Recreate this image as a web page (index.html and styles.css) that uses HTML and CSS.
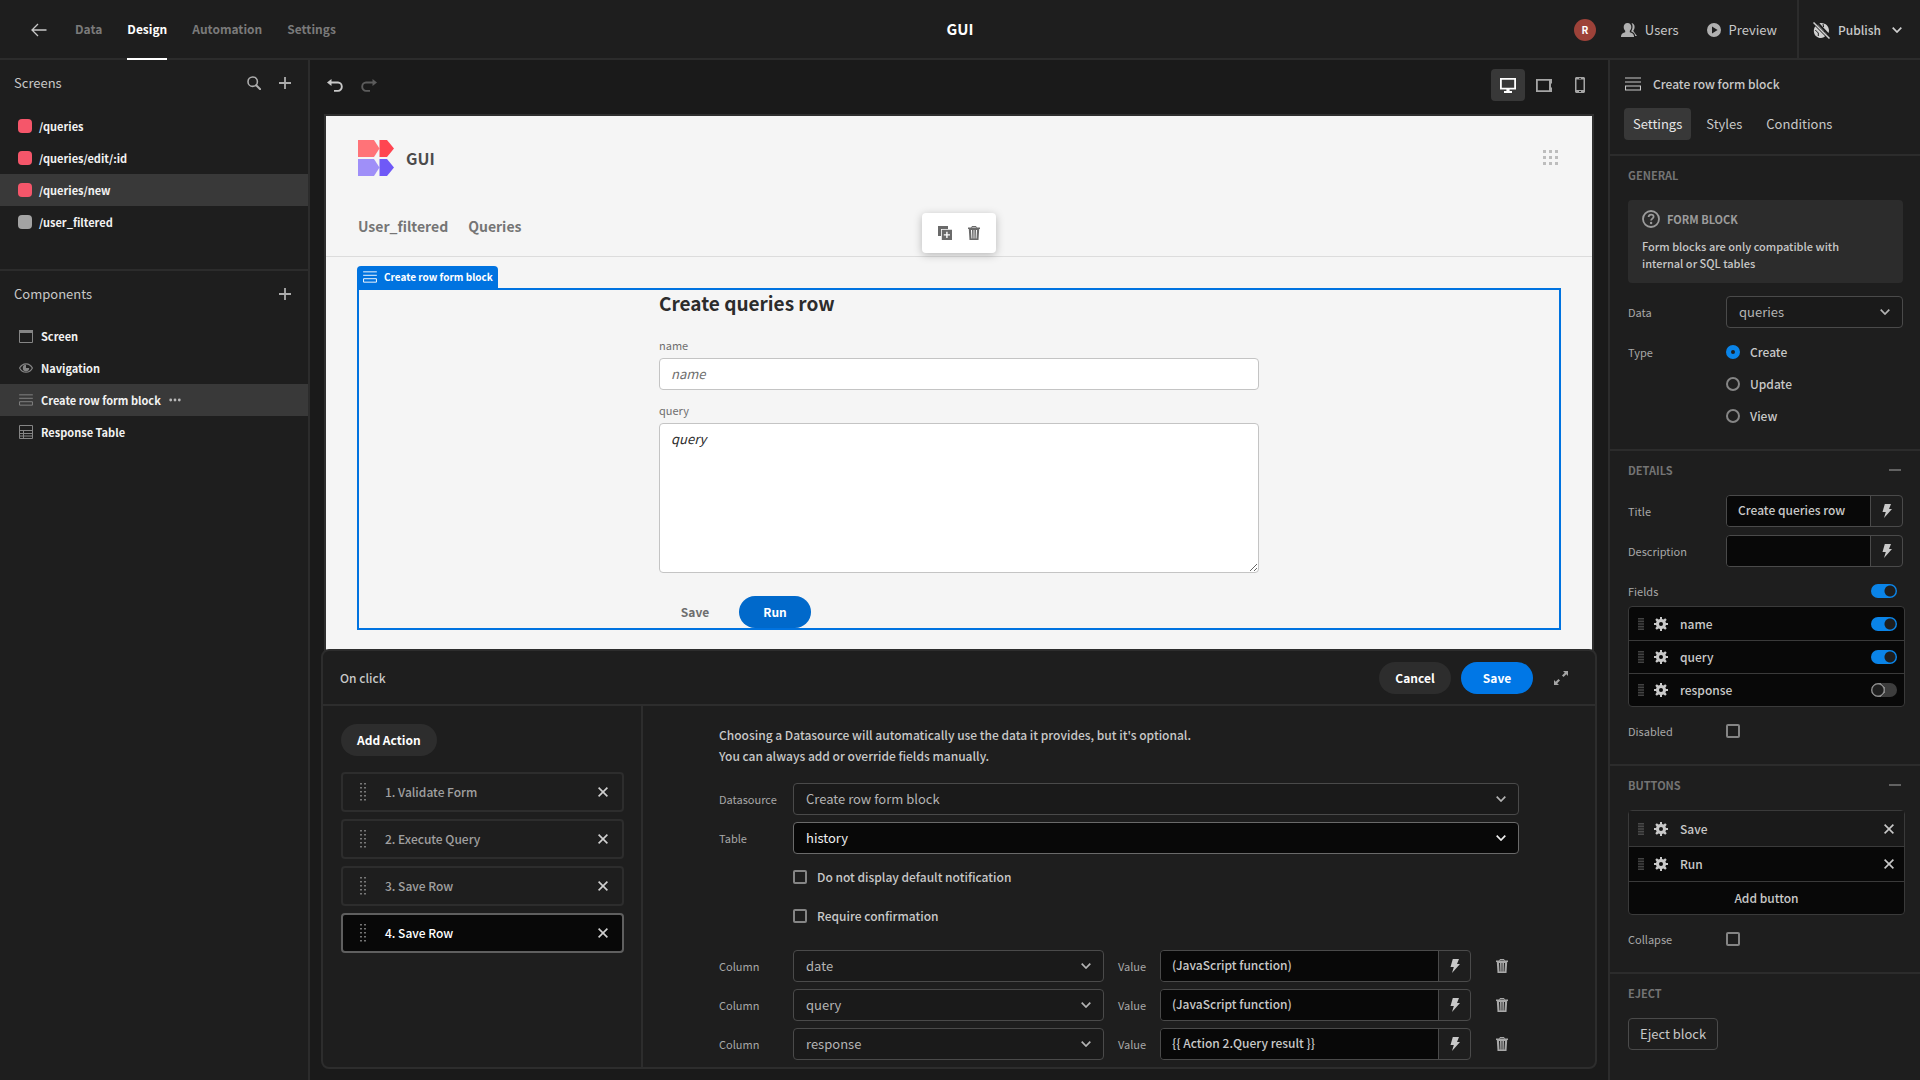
FILE: index.html
```html
<!DOCTYPE html>
<html lang="en">
<head>
    <meta charset="UTF-8">
    <meta name="viewport" content="width=device-width, initial-scale=1">
    <title>GUI - Design</title>
    <link rel="stylesheet" href="styles.css">
</head>
<body>

<!-- icons -->
<svg class="sprite" aria-hidden="true">
    <symbol id="i-back" viewBox="0 0 16 14"><path d="M15.5 7H1M7 1L1 7l6 6" fill="none" stroke="currentColor" stroke-width="1.3"/></symbol>
    <symbol id="i-search" viewBox="0 0 14 14"><circle cx="5.7" cy="5.7" r="4.7" fill="none" stroke="currentColor" stroke-width="1.6"/><path d="M9.2 9.2l4 4" stroke="currentColor" stroke-width="2" stroke-linecap="round"/></symbol>
    <symbol id="i-plus" viewBox="0 0 12 12"><path d="M6 0v12M0 6h12" stroke="currentColor" stroke-width="1.8"/></symbol>
    <symbol id="i-minus" viewBox="0 0 12 12"><path d="M0 6h12" stroke="currentColor" stroke-width="1.6"/></symbol>
    <symbol id="i-close" viewBox="0 0 10 10"><path d="M.6.6l8.8 8.8M9.4.6L.6 9.4" stroke="currentColor" stroke-width="1.6"/></symbol>
    <symbol id="i-chevron" viewBox="0 0 10 6"><path d="M.7.7L5 5 9.3.7" fill="none" stroke="currentColor" stroke-width="1.7"/></symbol>
    <symbol id="i-undo" viewBox="0 0 16 13"><path d="M4 3.5h7a3.8 4.2 0 0 1 0 8.4H7" fill="none" stroke="currentColor" stroke-width="1.9"/><path d="M0 3.5L4.5 0v7z"/></symbol>
    <symbol id="i-screen" viewBox="0 0 14 13"><path d="M.5.5h13v12H.5z" fill="none" stroke="currentColor"/><path d="M0 0h14v3H0z"/></symbol>
    <symbol id="i-eye" viewBox="0 0 14 10"><path d="M.6 5C3.5-.6 10.5-.6 13.4 5 10.5 10.6 3.5 10.6.6 5z" fill="none" stroke="currentColor" stroke-width="1.2"/><path d="M7 1.8A3.2 3.2 0 1 0 10.2 5H7z"/></symbol>
    <symbol id="i-form" viewBox="0 0 16 14"><path d="M0 1h16M0 5h16M.5 9h15v4H.5z" fill="none" stroke="currentColor" stroke-width="1.1"/></symbol>
    <symbol id="i-table" viewBox="0 0 14 14"><path d="M.5.5h13v13H.5zM0 5.5h14M0 8.5h14M0 11h14M4.5 5.5v8" fill="none" stroke="currentColor"/></symbol>
    <symbol id="i-more" viewBox="0 0 12 4"><circle cx="1.7" cy="2" r="1.4"/><circle cx="6" cy="2" r="1.4"/><circle cx="10.3" cy="2" r="1.4"/></symbol>
    <symbol id="i-desktop" viewBox="0 0 16 15"><path d="M0 0h16v11.5H9.6V13H12v2H4v-2h2.4v-1.5H0zM1.8 1.8v7.9h12.4V1.8z" fill-rule="evenodd"/></symbol>
    <symbol id="i-tablet" viewBox="0 0 16 13"><path d="M0 0h16v4.5h-1v4h1V13H0zM1.8 1.8v9.4H13V1.8z" fill-rule="evenodd"/></symbol>
    <symbol id="i-phone" viewBox="0 0 10 16"><path d="M1 0h8l1 1v14l-1 1H1l-1-1V1zM1.5 2.5V13h7V2.5zM4 .9v.8h2V.9zM4 14v1h2v-1z" fill-rule="evenodd"/></symbol>
    <symbol id="i-users" viewBox="0 0 16 14"><path d="M6.5 0C9 0 10.3 1.7 10.3 4c0 1.6-.7 3-1.5 3.8v1.4c2 .6 4.2 1.6 4.2 4V14H0v-.8c0-2.4 2.2-3.4 4.2-4V7.8C3.4 7 2.7 5.6 2.7 4 2.7 1.7 4 0 6.5 0z"/><path d="M10.6 0c2 .4 3 2 3 4s-.8 3-1.4 3.8L16 13h-1.8c-.4-2.6-1.8-3.8-3.9-4.5V8c1.6-2.4 1.8-5.4.3-8z"/></symbol>
    <symbol id="i-play" viewBox="0 0 14 14"><path d="M7 0a7 7 0 1 1 0 14A7 7 0 0 1 7 0zM5 3.6v6.8L10.6 7z" fill-rule="evenodd"/></symbol>
    <symbol id="i-globe" viewBox="0 0 17 17"><path d="M5 2.4l8.8 9.6C12 15 9.5 16 8 16c-4 0-7.2-3-7.2-7.3C.8 7 1.5 5 3 3.7zM8 .9c5 0 8 3.6 8 7.6 0 .8-.2 1.6-.5 2.4L6.4 1.2z"/><path d="M2.3 8l3 3v3M10 2l.6 3M11 12l1-4" stroke="#1e1e1e" fill="none"/><path d="M.5.5l16 16" stroke="#1e1e1e" stroke-width="3"/><path d="M.5.5l16 16" stroke="currentColor" stroke-width="1.5"/></symbol>
    <symbol id="i-help" viewBox="0 0 18 18"><circle cx="9" cy="9" r="8" fill="none" stroke="currentColor" stroke-width="1.8"/><path d="M6.6 7c0-3.2 5-3.2 5-.3 0 1.9-2.5 1.9-2.5 3.9" fill="none" stroke="currentColor" stroke-width="1.8"/><circle cx="9.1" cy="13" r="1.2"/></symbol>
    <symbol id="i-bolt" viewBox="0 0 10 14"><path d="M2.8 0H9L7 5h3L2 14l1.8-6H.5z"/></symbol>
    <symbol id="i-gear" viewBox="0 0 14 14"><path d="M6 0h2v2l1.5.6 1.7-1.4 1.5 1.5-1.3 1.8L12 6h2v2h-2l-.6 1.5 1.3 1.7-1.5 1.5-1.7-1.3L8 12v2H6v-2l-1.5-.6-1.7 1.3-1.5-1.5 1.3-1.7L2 8H0V6h2l.6-1.5-1.3-1.8 1.5-1.5 1.7 1.4L6 2zM7 5a2 2 0 1 0 0 4 2 2 0 0 0 0-4z" fill-rule="evenodd"/></symbol>
    <symbol id="i-trash" viewBox="0 0 12 14"><path d="M4 0h4l.8 1.5H12V3h-.8l-.7 11h-9L.8 3H0V1.5h3.2zM4.3 1h3.4l.3.5H4zM3 4l.5 8.5h.8L4 4zM5.6 4v8.5h.8V4zM8 4l-.3 8.5h.8L9 4z" fill-rule="evenodd"/></symbol>
    <symbol id="i-copy" viewBox="0 0 14 14"><path d="M0 0h10v3H3v7H0z"/><path d="M3.8 3.8H14V14H3.8zM8.2 5.8v2.4H5.8v1.4h2.4V12h1.4V9.6H12V8.2H9.6V5.8z" fill-rule="evenodd"/></symbol>
    <symbol id="i-expand" viewBox="0 0 14 14"><path d="M9 0h5v5l-1.7-1.7L9.5 6.1 8 4.6l2.8-2.9zM5 14H0V9l1.7 1.7L4.5 7.9 6 9.4l-2.8 2.9z"/></symbol>
    <symbol id="i-apps" viewBox="0 0 16 16"><path d="M0 0h3v3H0zM6 0h3v3H6zM12 0h3v3h-3zM0 6h3v3H0zM6 6h3v3H6zM12 6h3v3h-3zM0 12h3v3H0zM6 12h3v3H6zM12 12h3v3h-3z"/></symbol>
    <symbol id="i-grip" viewBox="0 0 6 18"><path d="M1 0v18M5 0v18" stroke="currentColor" stroke-width="1.6" stroke-dasharray="1.6 2.4" fill="none"/></symbol>
    <symbol id="i-drag" viewBox="0 0 6 12"><path d="M1 0v12M3 0v12M5 0v12" stroke="currentColor" stroke-width="1.2" stroke-dasharray="1.6 1" fill="none"/></symbol>
    <symbol id="i-logo" viewBox="0 0 36 36"><path d="M0 0h16l5.5 8.5L16 17H0z" fill="#ff7378"/><path d="M21.5 0H29l7 8.5-7 8.5h-7.5z" fill="#ff4551"/><path d="M0 19h16l5.5 8.5L16 36H0z" fill="#9f8ff8"/><path d="M21.5 19H29l7 8.5-7 8.5h-7.5z" fill="#6f59f7"/></symbol>
</svg>

<div class="app">
    <!-- top bar -->
    <header class="topbar">
        <div class="topbar-left">
            <a href="#" class="back" aria-label="Back"><svg width="16" height="14"><use href="#i-back"/></svg></a>
            <nav class="tabs">
                <a href="#">Data</a>
                <a href="#" class="current">Design</a>
                <a href="#">Automation</a>
                <a href="#">Settings</a>
            </nav>
        </div>
        <h1 class="app-name">GUI</h1>
        <div class="topbar-right">
            <span class="avatar">R</span>
            <button class="top-action"><svg width="16" height="14"><use href="#i-users"/></svg>Users</button>
            <button class="top-action preview"><svg width="14" height="14"><use href="#i-play"/></svg>Preview</button>
            <button class="top-action publish"><svg width="17" height="17"><use href="#i-globe"/></svg>Publish<svg class="arrow" width="10" height="6"><use href="#i-chevron"/></svg></button>
        </div>
    </header>

    <div class="main">
        <!-- screens and component tree -->
        <aside class="left">
            <section class="screens">
                <div class="panel-head">
                    <h2>Screens</h2>
                    <button aria-label="Search"><svg width="14" height="14"><use href="#i-search"/></svg></button>
                    <button aria-label="Add screen"><svg width="12" height="12"><use href="#i-plus"/></svg></button>
                </div>
                <ul class="nav-list">
                    <li><span class="dot"></span>/queries</li>
                    <li><span class="dot"></span>/queries/edit/:id</li>
                    <li class="current"><span class="dot"></span>/queries/new</li>
                    <li><span class="dot gray"></span>/user_filtered</li>
                </ul>
            </section>
            <section class="components">
                <div class="panel-head">
                    <h2>Components</h2>
                    <button aria-label="Add component"><svg width="12" height="12"><use href="#i-plus"/></svg></button>
                </div>
                <ul class="nav-list tree">
                    <li><svg width="14" height="13"><use href="#i-screen"/></svg>Screen</li>
                    <li><svg width="14" height="10"><use href="#i-eye"/></svg>Navigation</li>
                    <li class="current"><svg width="14" height="12"><use href="#i-form"/></svg>Create row form block<button class="more" aria-label="More"><svg width="12" height="4"><use href="#i-more"/></svg></button></li>
                    <li><svg width="14" height="14"><use href="#i-table"/></svg>Response Table</li>
                </ul>
            </section>
        </aside>

        <!-- preview -->
        <main class="center">
            <div class="toolbar">
                <button aria-label="Undo"><svg width="16" height="13"><use href="#i-undo"/></svg></button>
                <button class="redo" aria-label="Redo" disabled><svg width="16" height="13"><use href="#i-undo"/></svg></button>
                <div class="devices">
                    <button class="current" aria-label="Desktop"><svg width="16" height="15"><use href="#i-desktop"/></svg></button>
                    <button aria-label="Tablet"><svg width="16" height="13"><use href="#i-tablet"/></svg></button>
                    <button aria-label="Mobile"><svg width="10" height="16"><use href="#i-phone"/></svg></button>
                </div>
            </div>

            <div class="canvas">
                <div class="site-head">
                    <div class="site-title">
                        <svg width="36" height="36"><use href="#i-logo"/></svg>
                        <span>GUI</span>
                        <svg class="apps" width="16" height="16"><use href="#i-apps"/></svg>
                    </div>
                    <nav class="site-nav">
                        <a href="#">User_filtered</a>
                        <a href="#">Queries</a>
                    </nav>
                </div>
                <div class="block">
                    <div class="block-tag"><svg width="14" height="12"><use href="#i-form"/></svg>Create row form block</div>
                    <div class="block-tools">
                        <button aria-label="Duplicate"><svg width="14" height="14"><use href="#i-copy"/></svg></button>
                        <button aria-label="Delete"><svg width="12" height="14"><use href="#i-trash"/></svg></button>
                    </div>
                    <form class="form">
                        <h2>Create queries row</h2>
                        <label for="f-name">name</label>
                        <input id="f-name" type="text" placeholder="name">
                        <label for="f-query">query</label>
                        <textarea id="f-query" placeholder="query"></textarea>
                        <div class="form-buttons">
                            <button type="button" class="btn quiet">Save</button>
                            <button type="button" class="btn run">Run</button>
                        </div>
                    </form>
                </div>
            </div>

            <!-- action drawer -->
            <section class="drawer">
                <div class="drawer-head">
                    <h2>On click</h2>
                    <button class="btn dark">Cancel</button>
                    <button class="btn blue">Save</button>
                    <button class="expand" aria-label="Expand"><svg width="14" height="14"><use href="#i-expand"/></svg></button>
                </div>
                <div class="drawer-body">
                    <div class="actions">
                        <button class="btn dark add">Add Action</button>
                        <ul>
                            <li><svg class="grip" width="6" height="18"><use href="#i-grip"/></svg>1. Validate Form<button aria-label="Remove"><svg width="10" height="10"><use href="#i-close"/></svg></button></li>
                            <li><svg class="grip" width="6" height="18"><use href="#i-grip"/></svg>2. Execute Query<button aria-label="Remove"><svg width="10" height="10"><use href="#i-close"/></svg></button></li>
                            <li><svg class="grip" width="6" height="18"><use href="#i-grip"/></svg>3. Save Row<button aria-label="Remove"><svg width="10" height="10"><use href="#i-close"/></svg></button></li>
                            <li class="current"><svg class="grip" width="6" height="18"><use href="#i-grip"/></svg>4. Save Row<button aria-label="Remove"><svg width="10" height="10"><use href="#i-close"/></svg></button></li>
                        </ul>
                    </div>
                    <div class="config">
                        <div class="config-inner">
                            <p>Choosing a Datasource will automatically use the data it provides, but it's optional.<br>You can always add or override fields manually.</p>
                            <div class="params">
                                <label for="datasource">Datasource</label>
                                <div class="picker">
                                    <select id="datasource"><option>Create row form block</option></select>
                                    <svg width="10" height="6"><use href="#i-chevron"/></svg>
                                </div>
                                <label for="table">Table</label>
                                <div class="picker focus">
                                    <select id="table"><option>history</option></select>
                                    <svg width="10" height="6"><use href="#i-chevron"/></svg>
                                </div>
                                <label class="check"><input type="checkbox">Do not display default notification</label>
                                <label class="check"><input type="checkbox">Require confirmation</label>
                            </div>
                            <div class="columns">
                                <label for="col1">Column</label>
                                <div class="picker">
                                    <select id="col1"><option>date</option></select>
                                    <svg width="10" height="6"><use href="#i-chevron"/></svg>
                                </div>
                                <label for="val1">Value</label>
                                <div class="bind"><input id="val1" type="text" value="(JavaScript function)"><button aria-label="Bindings"><svg width="10" height="14"><use href="#i-bolt"/></svg></button></div>
                                <button class="trash" aria-label="Delete"><svg width="12" height="14"><use href="#i-trash"/></svg></button>

                                <label for="col2">Column</label>
                                <div class="picker">
                                    <select id="col2"><option>query</option></select>
                                    <svg width="10" height="6"><use href="#i-chevron"/></svg>
                                </div>
                                <label for="val2">Value</label>
                                <div class="bind"><input id="val2" type="text" value="(JavaScript function)"><button aria-label="Bindings"><svg width="10" height="14"><use href="#i-bolt"/></svg></button></div>
                                <button class="trash" aria-label="Delete"><svg width="12" height="14"><use href="#i-trash"/></svg></button>

                                <label for="col3">Column</label>
                                <div class="picker">
                                    <select id="col3"><option>response</option></select>
                                    <svg width="10" height="6"><use href="#i-chevron"/></svg>
                                </div>
                                <label for="val3">Value</label>
                                <div class="bind"><input id="val3" type="text" value="{{ Action 2.Query result }}"><button aria-label="Bindings"><svg width="10" height="14"><use href="#i-bolt"/></svg></button></div>
                                <button class="trash" aria-label="Delete"><svg width="12" height="14"><use href="#i-trash"/></svg></button>
                            </div>
                        </div>
                    </div>
                </div>
            </section>
        </main>

        <!-- component settings -->
        <aside class="right">
            <div class="right-head">
                <h2><svg width="16" height="14"><use href="#i-form"/></svg>Create row form block</h2>
                <div class="right-tabs">
                    <button class="current">Settings</button>
                    <button>Styles</button>
                    <button>Conditions</button>
                </div>
            </div>

            <section class="group">
                <h3>GENERAL</h3>
                <div class="info">
                    <h4><svg width="18" height="18"><use href="#i-help"/></svg>FORM BLOCK</h4>
                    <p>Form blocks are only compatible with internal or SQL tables</p>
                </div>
                <div class="prop">
                    <label for="data">Data</label>
                    <div class="picker">
                        <select id="data"><option>queries</option></select>
                        <svg width="10" height="6"><use href="#i-chevron"/></svg>
                    </div>
                </div>
                <fieldset class="prop radios">
                    <legend>Type</legend>
                    <label><input type="radio" name="type" checked>Create</label>
                    <label><input type="radio" name="type">Update</label>
                    <label><input type="radio" name="type">View</label>
                </fieldset>
            </section>

            <section class="group">
                <h3>DETAILS<svg width="12" height="12"><use href="#i-minus"/></svg></h3>
                <div class="prop">
                    <label for="title">Title</label>
                    <div class="bind"><input id="title" type="text" value="Create queries row"><button aria-label="Bindings"><svg width="10" height="14"><use href="#i-bolt"/></svg></button></div>
                </div>
                <div class="prop">
                    <label for="desc">Description</label>
                    <div class="bind"><input id="desc" type="text"><button aria-label="Bindings"><svg width="10" height="14"><use href="#i-bolt"/></svg></button></div>
                </div>
                <div class="fields-head">
                    <label for="all-fields">Fields</label>
                    <input id="all-fields" class="switch" type="checkbox" checked>
                </div>
                <ul class="sortable">
                    <li><svg class="drag" width="6" height="12"><use href="#i-drag"/></svg><svg width="14" height="14"><use href="#i-gear"/></svg><label for="s-name">name</label><input id="s-name" class="switch" type="checkbox" checked></li>
                    <li><svg class="drag" width="6" height="12"><use href="#i-drag"/></svg><svg width="14" height="14"><use href="#i-gear"/></svg><label for="s-query">query</label><input id="s-query" class="switch" type="checkbox" checked></li>
                    <li><svg class="drag" width="6" height="12"><use href="#i-drag"/></svg><svg width="14" height="14"><use href="#i-gear"/></svg><label for="s-response">response</label><input id="s-response" class="switch" type="checkbox"></li>
                </ul>
                <div class="prop">
                    <label for="disabled">Disabled</label>
                    <input id="disabled" type="checkbox">
                </div>
            </section>

            <section class="group">
                <h3>BUTTONS<svg width="12" height="12"><use href="#i-minus"/></svg></h3>
                <ul class="sortable tall">
                    <li class="hover"><svg class="drag" width="6" height="12"><use href="#i-drag"/></svg><svg width="14" height="14"><use href="#i-gear"/></svg><span>Save</span><button aria-label="Remove"><svg width="10" height="10"><use href="#i-close"/></svg></button></li>
                    <li><svg class="drag" width="6" height="12"><use href="#i-drag"/></svg><svg width="14" height="14"><use href="#i-gear"/></svg><span>Run</span><button aria-label="Remove"><svg width="10" height="10"><use href="#i-close"/></svg></button></li>
                    <li class="add-row"><button>Add button</button></li>
                </ul>
                <div class="prop">
                    <label for="collapse">Collapse</label>
                    <input id="collapse" type="checkbox">
                </div>
            </section>

            <section class="group">
                <h3>EJECT</h3>
                <button class="eject">Eject block</button>
            </section>
        </aside>
    </div>
</div>

</body>
</html>
```
FILE: styles.css
```css
* {
    margin: 0;
    padding: 0;
    list-style: none;
    box-sizing: border-box;
}

body {
    background-color: #1e1e1e;
    color: #c8c8c8;
    font-family: "Noto Sans CJK SC", "Noto Sans", sans-serif;
    font-size: 12px;
    font-weight: 500;
    line-height: 20px;
}

a {
    color: inherit;
    text-decoration: none;
}

button,
input,
select,
textarea {
    font: inherit;
    color: inherit;
    outline: none;
}

button {
    background: none;
    border: none;
    cursor: pointer;
}

h1, h2, h3, h4 {
    font-size: 12px;
    font-weight: 500;
}

svg {
    display: block;
    flex: none;
    fill: currentColor;
}

.sprite {
    width: 0;
    height: 0;
    position: absolute;
}

.app {
    height: 100vh;
    display: flex;
    flex-direction: column;
    overflow: hidden;
}

/* top bar */
.topbar {
    height: 60px;
    flex: none;
    display: grid;
    grid-template-columns: 1fr auto 1fr;
    align-items: stretch;
    border-bottom: 2px solid #2c2c2c;
}

.topbar-left,
.tabs,
.topbar-right {
    display: flex;
    align-items: center;
}

.back {
    margin: 0 28px 0 31px;
}

.tabs {
    align-self: stretch;
    gap: 25px;
    font-weight: 700;
    color: #7a7a7a;
}

.tabs a {
    height: 60px;
    line-height: 58px;
}

.tabs a.current {
    color: #fff;
    border-bottom: 2px solid #fff;
}

.app-name {
    font-size: 15px;
    font-weight: 700;
    line-height: 58px;
    color: #fff;
}

.topbar-right {
    justify-content: flex-end;
}

.avatar {
    width: 22px;
    height: 22px;
    margin-right: 25px;
    border-radius: 50%;
    background-color: #9d4239;
    color: #fff;
    font-size: 10px;
    font-weight: 700;
    line-height: 22px;
    text-align: center;
}

.top-action {
    display: flex;
    align-items: center;
    gap: 8px;
    font-size: 13px;
    font-weight: 400;
}

.top-action svg {
    color: #b0b0b0;
}

.preview {
    margin: 0 20px 0 28px;
}

.publish {
    align-self: stretch;
    padding: 0 18px 0 14px;
    border-left: 2px solid #2c2c2c;
    font-size: 12px;
    font-weight: 500;
}

.publish svg {
    color: #d0d0d0;
}

.publish .arrow {
    margin-left: 3px;
}

.main {
    flex: 1;
    min-height: 0;
    display: flex;
}

/* left panel */
.left {
    width: 310px;
    flex: none;
    border-right: 2px solid #2c2c2c;
}

.screens {
    border-bottom: 2px solid #2c2c2c;
}

.panel-head {
    height: 46px;
    padding: 0 17px 0 14px;
    display: flex;
    align-items: center;
    gap: 18px;
}

.panel-head h2 {
    flex: 1;
    font-size: 13px;
    font-weight: 400;
}

.panel-head button {
    color: #adadad;
}

.nav-list {
    margin: 4px 0 31px;
    font-size: 11px;
    font-weight: 700;
    color: #f2f2f2;
}

.nav-list li {
    height: 32px;
    padding-left: 18px;
    display: flex;
    align-items: center;
    gap: 7px;
}

.nav-list li.current {
    background-color: #393939;
}

.tree {
    margin-top: 3px;
}

.tree li {
    padding-left: 19px;
    gap: 8px;
}

.tree svg {
    color: #858585;
}

.tree .more svg {
    color: #b8b8b8;
}

.dot {
    width: 14px;
    height: 14px;
    border-radius: 4px;
    background-color: #f5566a;
}

.dot.gray {
    background-color: #a3a3a3;
}

/* center */
.center {
    flex: 1;
    min-width: 0;
    padding: 0 11px 11px;
    display: flex;
    flex-direction: column;
    background-color: #1a1a1a;
}

.toolbar {
    height: 54px;
    padding: 0 0 4px 6px;
    flex: none;
    display: flex;
    align-items: center;
    gap: 18px;
}

.redo {
    color: #5c5c5c;
    transform: scaleX(-1);
}

.devices {
    margin-left: auto;
    display: flex;
    gap: 2px;
}

.devices button {
    width: 34px;
    height: 32px;
    display: flex;
    justify-content: center;
    align-items: center;
    border-radius: 4px;
    color: #a5a5a5;
}

.devices button.current {
    background-color: #383838;
    color: #fff;
}

.canvas {
    flex: 1;
    min-height: 0;
    margin: 0 3px -10px;
    border: 2px solid #2f2f2f;
    background-color: #f5f5f5;
    color: #4b4b4b;
}

.site-head {
    padding: 24px 33px 0 32px;
    border-bottom: 1px solid #dcdcdc;
}

.site-title {
    display: flex;
    align-items: center;
    gap: 12px;
    font-size: 16px;
    font-weight: 700;
}

.apps {
    margin-left: auto;
    color: #bdbdbd;
}

.site-nav {
    padding: 38px 0 18px;
    display: flex;
    gap: 20px;
    font-size: 14px;
    font-weight: 700;
    line-height: 24px;
    color: #757575;
}

.block {
    position: relative;
    margin: 31px 31px 0;
    border: 2px solid #0073e0;
}

.block-tag {
    height: 22px;
    padding: 0 5px 0 6px;
    position: absolute;
    left: -2px;
    top: -24px;
    display: flex;
    align-items: center;
    gap: 7px;
    border-radius: 4px 4px 0 0;
    background-color: #0073e0;
    color: #fff;
    font-size: 10px;
    font-weight: 700;
}

.block-tools {
    padding: 0 16px;
    height: 40px;
    position: absolute;
    left: 50%;
    top: -77px;
    transform: translateX(-50%);
    display: flex;
    align-items: center;
    gap: 16px;
    border-radius: 4px;
    background-color: #fff;
    box-shadow: 0 2px 8px rgba(0, 0, 0, 0.25);
    color: #6a6a6a;
}

.form {
    max-width: 600px;
    margin: 0 auto;
    display: flex;
    flex-direction: column;
}

.form h2 {
    margin-bottom: 24px;
    font-size: 19px;
    font-weight: 700;
    line-height: 26px;
    color: #2c2c2c;
}

.form label {
    margin-bottom: 8px;
    font-size: 11px;
    font-weight: 400;
    line-height: 10px;
    color: #6e6e6e;
}

.form input,
.form textarea {
    padding: 0 11px;
    border: 1px solid #c4c4c4;
    border-radius: 4px;
    background-color: #fff;
    font-size: 13px;
    font-weight: 400;
}

.form input {
    height: 32px;
    padding-bottom: 2px;
    margin-bottom: 15px;
}

.form textarea {
    height: 150px;
    padding-top: 5px;
    margin-bottom: 23px;
}

.form input::placeholder,
.form textarea::placeholder {
    font-style: italic;
    color: #6e6e6e;
}

.form textarea::placeholder {
    color: #2c2c2c;
}

.form-buttons {
    display: flex;
    gap: 8px;
}

.btn {
    min-width: 72px;
    height: 32px;
    padding: 0 16px;
    border-radius: 16px;
    font-weight: 700;
    color: #fff;
}

.btn.quiet {
    color: #6e6e6e;
}

.btn.run {
    background-color: #0069cb;
}

.btn.blue {
    background-color: #0077e6;
}

.btn.dark {
    background-color: #2d2d2d;
}

/* drawer */
.drawer {
    position: relative;
    flex: none;
    border: 2px solid #2d2d2d;
    border-radius: 8px;
    background-color: #1e1e1e;
}

.drawer-head {
    height: 55px;
    padding: 0 27px 0 17px;
    display: flex;
    align-items: center;
    gap: 10px;
    border-bottom: 2px solid #2d2d2d;
}

.drawer-head h2 {
    flex: 1;
}

.expand {
    margin-left: 11px;
    color: #a5a5a5;
}

.drawer-body {
    display: flex;
}

.actions {
    width: 320px;
    flex: none;
    padding: 18px 17px 18px 18px;
    border-right: 2px solid #2d2d2d;
}

.actions .add {
    margin-bottom: 16px;
}

.actions ul {
    display: flex;
    flex-direction: column;
    gap: 7px;
}

.actions li {
    height: 40px;
    padding: 0 14px 0 17px;
    display: flex;
    align-items: center;
    border: 2px solid #2d2d2d;
    border-radius: 4px;
    color: #a0a0a0;
}

.actions li button {
    margin-left: auto;
    color: #d0d0d0;
}

.actions li.current {
    border-color: #5f5f5f;
    background-color: #080808;
    color: #fff;
}

.grip {
    margin-right: 19px;
    color: #8e8e8e;
}

.config {
    flex: 1;
    padding: 18px 20px 7px;
}

.config-inner {
    max-width: 800px;
    margin: 0 auto;
}

.config-inner p {
    margin-bottom: 17px;
    line-height: 21px;
}

.params,
.columns {
    display: grid;
    grid-template-columns: 60px 1fr;
    gap: 7px 14px;
    align-items: center;
}

.params label,
.columns label,
.prop label,
.prop legend,
.fields-head label {
    font-size: 11px;
    font-weight: 400;
    color: #a8a8a8;
}

.params .check {
    height: 32px;
    grid-column: 2;
    display: flex;
    align-items: center;
    gap: 10px;
    font-size: 12px;
    font-weight: 500;
    color: #c8c8c8;
}

.columns {
    margin-top: 18px;
    grid-template-columns: 60px 1fr 28px 1fr 34px;
}

.trash {
    display: flex;
    justify-content: center;
    color: #a8a8a8;
}

.picker {
    display: grid;
    align-items: center;
    color: #b4b4b4;
}

.picker select {
    grid-area: 1 / 1;
    width: 100%;
    height: 32px;
    padding: 0 12px;
    appearance: none;
    border: 1px solid #4a4a4a;
    border-radius: 4px;
    background-color: #1a1a1a;
    font-size: 13px;
    font-weight: 400;
}

.picker svg {
    grid-area: 1 / 1;
    justify-self: end;
    margin-right: 13px;
    pointer-events: none;
}

.picker.focus {
    color: #f0f0f0;
}

.picker.focus select {
    border-color: #6a6a6a;
    background-color: #080808;
}

.bind {
    height: 32px;
    display: flex;
    overflow: hidden;
    border: 1px solid #4a4a4a;
    border-radius: 4px;
}

.bind input {
    flex: 1;
    min-width: 0;
    padding: 0 11px 2px;
    border: none;
    background-color: #080808;
}

.bind button {
    width: 32px;
    display: flex;
    justify-content: center;
    align-items: center;
    border-left: 1px solid #4a4a4a;
}

input[type="checkbox"],
input[type="radio"] {
    width: 14px;
    height: 14px;
    flex: none;
    appearance: none;
    border: 2px solid #858585;
    border-radius: 2px;
}

input[type="radio"] {
    border-radius: 50%;
}

input[type="radio"]:checked {
    border: 5px solid #0a84e8;
}

input.switch {
    width: 26px;
    border: none;
    border-radius: 7px;
    background: radial-gradient(circle at 7px 7px, #1e1e1e 5px, #8a8a8a 6px, #8a8a8a 7px, #3d3d3d 7px);
}

input.switch:checked {
    background: radial-gradient(circle at 19px 7px, #1e1e1e 5px, #0a84e8 6px);
}

/* right panel */
.right {
    width: 312px;
    flex: none;
    border-left: 2px solid #2c2c2c;
}

.right-head {
    height: 96px;
    padding: 14px 14px 0;
    border-bottom: 2px solid #2c2c2c;
}

.right-head h2 {
    display: flex;
    align-items: center;
    gap: 12px;
    padding-left: 1px;
}

.right-tabs {
    margin-top: 14px;
    display: flex;
    gap: 6px;
}

.right-tabs button {
    height: 32px;
    padding: 0 9px;
    border-radius: 4px;
    font-size: 13px;
    font-weight: 400;
}

.right-tabs button.current {
    background-color: #383838;
    color: #e6e6e6;
}

.group {
    padding: 9px 17px 9px 18px;
    border-bottom: 2px solid #2c2c2c;
}

.group:last-child {
    border-bottom: none;
}

.group h3 {
    margin-bottom: 15px;
    padding-right: 2px;
    display: flex;
    justify-content: space-between;
    align-items: center;
    font-size: 11px;
    font-weight: 700;
    color: #747474;
}

.info {
    margin-bottom: 13px;
    padding: 10px 32px 11px 14px;
    border-radius: 4px;
    background-color: #2c2c2c;
}

.info h4 {
    margin-bottom: 10px;
    display: flex;
    align-items: center;
    gap: 7px;
    font-size: 11px;
    font-weight: 700;
    line-height: 18px;
    color: #9c9c9c;
}

.info p {
    font-size: 11px;
    line-height: 17px;
}

.prop {
    min-height: 32px;
    margin-bottom: 8px;
    display: grid;
    grid-template-columns: 84px 177px;
    column-gap: 14px;
    align-items: center;
}

.radios {
    border: none;
}

.radios legend {
    float: left;
    grid-row: 1;
    line-height: 32px;
}

.radios label {
    height: 32px;
    grid-column: 2;
    display: flex;
    align-items: center;
    gap: 10px;
    font-size: 12px;
    font-weight: 500;
    color: #c8c8c8;
}

.fields-head {
    height: 31px;
    padding-right: 6px;
    display: flex;
    justify-content: space-between;
    align-items: center;
}

.sortable {
    margin: 0 -2px 8px 0;
    border: 1px solid #3a3a3a;
    border-radius: 4px;
    background-color: #080808;
}

.sortable li {
    height: 33px;
    padding: 0 7px 0 9px;
    display: flex;
    align-items: center;
}

.sortable.tall li {
    height: 35px;
    padding-right: 10px;
}

.sortable li + li {
    border-top: 1px solid #3a3a3a;
}

.sortable li.hover {
    background-color: #1a1a1a;
}

.sortable label,
.sortable span {
    flex: 1;
    margin-left: 12px;
}

.sortable .drag {
    margin-right: 10px;
    color: #6a6a6a;
}

.sortable.tall .add-row {
    height: 33px;
    padding: 0;
    justify-content: center;
}

.eject {
    height: 32px;
    padding: 0 11px;
    border: 1px solid #4a4a4a;
    border-radius: 4px;
    font-size: 13px;
    font-weight: 400;
}
```
